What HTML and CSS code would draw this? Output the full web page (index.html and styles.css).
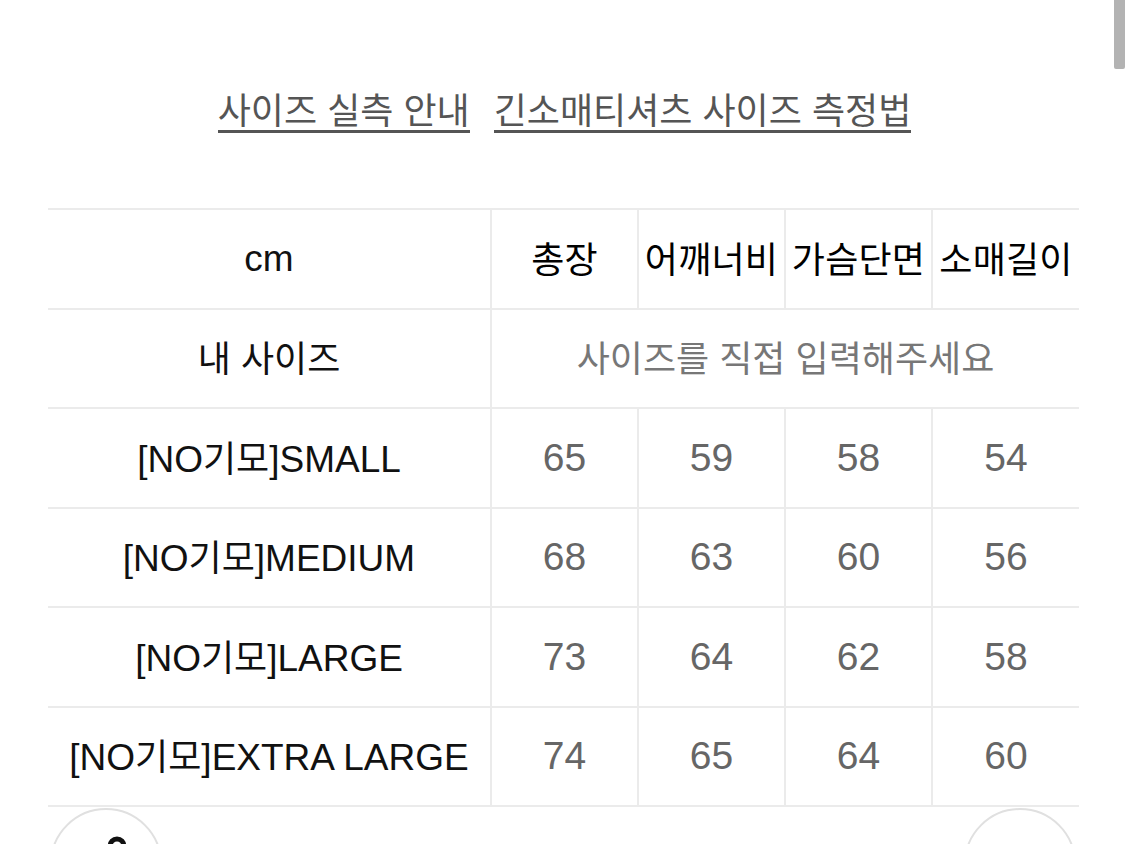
FILE: index.html
```html
<!DOCTYPE html>
<html lang="ko">
<head>
<meta charset="utf-8">
<title>사이즈 실측 안내</title>
<link rel="stylesheet" href="styles.css">
</head>
<body>
<div class="scroll-thumb"></div>
<main class="page">
  <nav class="links">
    <a class="link" href="#">사이즈 실측 안내</a>
    <a class="link" href="#">긴소매티셔츠 사이즈 측정법</a>
  </nav>
  <table class="size-table">
    <colgroup>
      <col class="c-name"><col class="c-val"><col class="c-val"><col class="c-val"><col class="c-val">
    </colgroup>
    <tr class="head">
      <td class="name">cm</td>
      <td><span class="ko">총장</span></td>
      <td><span class="ko">어깨너비</span></td>
      <td><span class="ko">가슴단면</span></td>
      <td><span class="ko">소매길이</span></td>
    </tr>
    <tr>
      <td class="name"><span class="ko">내 사이즈</span></td>
      <td colspan="4" class="hint"><span class="ko">사이즈를 직접 입력해주세요</span></td>
    </tr>
    <tr>
      <td class="name">[NO<span class="ko">기모</span>]SMALL</td>
      <td class="num">65</td><td class="num">59</td><td class="num">58</td><td class="num">54</td>
    </tr>
    <tr>
      <td class="name">[NO<span class="ko">기모</span>]MEDIUM</td>
      <td class="num">68</td><td class="num">63</td><td class="num">60</td><td class="num">56</td>
    </tr>
    <tr>
      <td class="name">[NO<span class="ko">기모</span>]LARGE</td>
      <td class="num">73</td><td class="num">64</td><td class="num">62</td><td class="num">58</td>
    </tr>
    <tr>
      <td class="name">[NO<span class="ko">기모</span>]EXTRA LARGE</td>
      <td class="num">74</td><td class="num">65</td><td class="num">64</td><td class="num">60</td>
    </tr>
  </table>
  <div class="fab-row">
    <button class="fab" type="button" aria-label="도움말">
      <svg class="fab-icon" width="40" height="40" viewBox="0 0 40 40"><circle cx="20" cy="12" r="7" fill="none" stroke="#111" stroke-width="5"/></svg>
    </button>
    <button class="fab" type="button" aria-label="위로"></button>
  </div>
</main>
</body>
</html>
```
FILE: styles.css
```css
html, body {
  margin: 0;
  padding: 0;
  background: #fff;
}
body {
  font-family: "Liberation Sans", Arial, "Noto Sans CJK KR", sans-serif;
  color: #111;
  overflow: hidden;
}
.scroll-thumb {
  position: absolute;
  top: 0;
  right: 0;
  width: 11px;
  height: 69px;
  background: #b3b3b3;
  border-radius: 0 0 2px 2px;
}
.page {
  padding: 0 46px 0 48px;
}
.links {
  display: flex;
  justify-content: center;
  gap: 24px;
  padding-top: 86px;
  height: 208px;
  box-sizing: border-box;
  padding-left: 2px;
}
.link {
  font-family: "Noto Sans CJK KR", sans-serif;
  font-size: 36px;
  line-height: 44px;
  height: 44px;
  color: #555;
  text-decoration: none;
  border-bottom: 3px solid #555;
}
.size-table {
  width: 1031px;
  border-collapse: collapse;
  table-layout: fixed;
}
.c-name { width: 443px; }
.c-val { width: 147px; }
.size-table tr {
  height: 99.5px;
}
.size-table td {
  border-top: 2px solid #ebebeb;
  border-bottom: 2px solid #ebebeb;
  border-left: 2px solid #ebebeb;
  text-align: center;
  vertical-align: middle;
  padding: 0;
  font-size: 37px;
  line-height: 44px;
  white-space: nowrap;
}
.size-table td:first-child {
  border-left: none;
}
.ko {
  font-family: "Noto Sans CJK KR", sans-serif;
  font-size: 36px;
}
.head .ko {
  font-size: 36px;
  font-weight: 400;
  color: #000;
  letter-spacing: 0.2px;
}
.name {
  color: #111;
}
.hint {
  color: #777;
}
.num {
  color: #666;
  font-size: 39px !important;
}
.fab-row {
  display: flex;
  justify-content: space-between;
  padding: 1px 3px 0 2px;
}
.fab {
  width: 112px;
  height: 112px;
  border-radius: 50%;
  border: 2px solid #e0e0e0;
  background: #fff;
  padding: 0;
  display: flex;
  justify-content: center;
  align-items: flex-start;
}
.fab-icon {
  margin-top: 24px;
  margin-left: 22px;
}
```
